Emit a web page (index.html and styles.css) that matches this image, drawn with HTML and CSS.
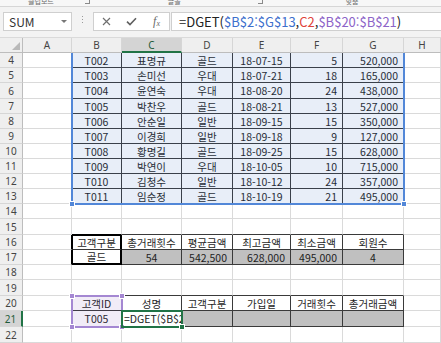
FILE: index.html
```html
<!DOCTYPE html>
<html lang="ko">
<head>
    <meta charset="UTF-8">
    <title>DGET</title>
    <link rel="stylesheet" href="styles.css">
</head>
<body>
    <div class="ribbon">
        <span class="grp grp-clip">클립보드</span>
        <span class="launch launch-1"></span>
        <span class="grp grp-font">글꼴</span>
        <span class="launch launch-2"></span>
        <span class="grp grp-align">맞춤</span>
    </div>

    <div class="fbar">
        <div class="namebox">SUM<span class="caret"></span></div>
        <div class="dots"><i></i><i></i><i></i></div>
        <div class="btns">
            <span class="btn">
                <svg width="9" height="9" viewBox="0 0 9 9"><path d="M1 1L8 8M8 1L1 8" stroke="#6f6f6f" stroke-width="1.2" fill="none"/></svg>
            </span>
            <span class="btn">
                <svg width="11" height="9" viewBox="0 0 11 9"><path d="M1 4.6L4 7.6L10 1.2" stroke="#5f5f5f" stroke-width="1.6" fill="none"/></svg>
            </span>
            <span class="btn fx"><i>f</i><small>x</small></span>
        </div>
        <div class="formula">=DGET(<span class="ref-b">$B$2:$G$13</span>,<span class="ref-r">C2</span>,<span class="ref-p">$B$20:$B$21</span>)</div>
    </div>

    <div class="sheet">
        <div class="corner"><span class="tri"></span></div>
        <div class="ch">A</div><div class="ch">B</div><div class="ch on">C</div><div class="ch">D</div>
        <div class="ch">E</div><div class="ch">F</div><div class="ch">G</div><div class="ch">H</div>

        <div class="rh">4</div><div class="c dr"></div><div class="c d ctr">T002</div><div class="c d ctr">표명규</div><div class="c d ctr">골드</div><div class="c d ctr">18-07-15</div><div class="c d num">5</div><div class="c d num">520,000</div><div class="c"></div>
        <div class="rh">5</div><div class="c dr"></div><div class="c d ctr">T003</div><div class="c d ctr">손미선</div><div class="c d ctr">우대</div><div class="c d ctr">18-07-21</div><div class="c d num">18</div><div class="c d num">165,000</div><div class="c"></div>
        <div class="rh">6</div><div class="c dr"></div><div class="c d ctr">T004</div><div class="c d ctr">윤연숙</div><div class="c d ctr">우대</div><div class="c d ctr">18-08-20</div><div class="c d num">24</div><div class="c d num">438,000</div><div class="c"></div>
        <div class="rh">7</div><div class="c dr"></div><div class="c d ctr">T005</div><div class="c d ctr">박찬우</div><div class="c d ctr">골드</div><div class="c d ctr">18-08-21</div><div class="c d num">13</div><div class="c d num">527,000</div><div class="c"></div>
        <div class="rh">8</div><div class="c dr"></div><div class="c d ctr">T006</div><div class="c d ctr">안순일</div><div class="c d ctr">일반</div><div class="c d ctr">18-09-15</div><div class="c d num">15</div><div class="c d num">350,000</div><div class="c"></div>
        <div class="rh">9</div><div class="c dr"></div><div class="c d ctr">T007</div><div class="c d ctr">이경희</div><div class="c d ctr">일반</div><div class="c d ctr">18-09-18</div><div class="c d num">9</div><div class="c d num">127,000</div><div class="c"></div>
        <div class="rh">10</div><div class="c dr"></div><div class="c d ctr">T008</div><div class="c d ctr">황명길</div><div class="c d ctr">골드</div><div class="c d ctr">18-09-25</div><div class="c d num">15</div><div class="c d num">628,000</div><div class="c"></div>
        <div class="rh">11</div><div class="c dr"></div><div class="c d ctr">T009</div><div class="c d ctr">박연이</div><div class="c d ctr">우대</div><div class="c d ctr">18-10-05</div><div class="c d num">10</div><div class="c d num">715,000</div><div class="c"></div>
        <div class="rh">12</div><div class="c dr"></div><div class="c d ctr">T010</div><div class="c d ctr">김청수</div><div class="c d ctr">일반</div><div class="c d ctr">18-10-12</div><div class="c d num">24</div><div class="c d num">357,000</div><div class="c"></div>
        <div class="rh">13</div><div class="c dr"></div><div class="c d ctr">T011</div><div class="c d ctr">임순정</div><div class="c d ctr">골드</div><div class="c d ctr">18-10-19</div><div class="c d num">21</div><div class="c d num">495,000</div><div class="c"></div>

        <div class="rh">14</div><div class="c"></div><div class="c"></div><div class="c"></div><div class="c"></div><div class="c"></div><div class="c"></div><div class="c"></div><div class="c"></div>
        <div class="rh">15</div><div class="c"></div><div class="c kb"></div><div class="c db"></div><div class="c db"></div><div class="c db"></div><div class="c db"></div><div class="c db"></div><div class="c"></div>

        <div class="rh">16</div><div class="c kr"></div><div class="c d ctr frame top">고객구분</div><div class="c d ctr">총거래횟수</div><div class="c d ctr">평균금액</div><div class="c d ctr">최고금액</div><div class="c d ctr">최소금액</div><div class="c d ctr">회원수</div><div class="c"></div>
        <div class="rh">17</div><div class="c kr"></div><div class="c d ctr frame bot">골드</div><div class="c d g ctr">54</div><div class="c d g num">542,500</div><div class="c d g num">628,000</div><div class="c d g num">495,000</div><div class="c d g ctr">4</div><div class="c"></div>

        <div class="rh">18</div><div class="c"></div><div class="c"></div><div class="c"></div><div class="c"></div><div class="c"></div><div class="c"></div><div class="c"></div><div class="c"></div>
        <div class="rh">19</div><div class="c"></div><div class="c db"></div><div class="c db"></div><div class="c db"></div><div class="c db"></div><div class="c db"></div><div class="c db"></div><div class="c"></div>

        <div class="rh">20</div><div class="c dr"></div><div class="c d ctr">고객ID</div><div class="c d ctr">성명</div><div class="c d ctr">고객구분</div><div class="c d ctr">가입일</div><div class="c d ctr">거래횟수</div><div class="c d ctr">총거래금액</div><div class="c"></div>
        <div class="rh on">21</div><div class="c dr"></div><div class="c d ctr">T005</div><div class="c d edit">=DGET($B$2</div><div class="c d g"></div><div class="c d g"></div><div class="c d g"></div><div class="c d g"></div><div class="c"></div>
        <div class="rh">22</div><div class="c"></div><div class="c"></div><div class="c"></div><div class="c"></div><div class="c"></div><div class="c"></div><div class="c"></div><div class="c"></div>

        <div class="sel sel-blue"><span class="hd bl"></span><span class="hd br"></span></div>
        <div class="sel sel-purple"><span class="hd tl"></span><span class="hd tr"></span><span class="hd bl"></span><span class="hd br"></span></div>
        <div class="sel sel-green"><span class="hd br"></span></div>
    </div>
</body>
</html>
```

FILE: styles.css
```css
body {
    margin: 0;
    width: 441px;
    height: 343px;
    overflow: hidden;
    background-color: #fff;
    font-family: "Noto Sans CJK KR", "Noto Sans", sans-serif;
}

/* ribbon remnant at the very top */
.ribbon {
    height: 6px;
    overflow: hidden;
    display: flex;
    align-items: flex-start;
    background-color: #f7f7f7;
    border-bottom: 1px solid #d6d6d6;
    color: #6a6a6a;
}

.grp {
    font-size: 7px;
    line-height: 8px;
    margin-top: -3px;
}

.grp-clip { margin-left: 28px; }
.grp-font { margin-left: 78px; }
.grp-align { margin-left: 83px; }

.launch {
    width: 4px;
    height: 3px;
    border-right: 1px solid #8a8a8a;
    border-bottom: 1px solid #8a8a8a;
}

.launch-1 { margin-left: 31px; }
.launch-2 { margin-left: 77px; }

/* formula bar */
.fbar {
    height: 31px;
    box-sizing: border-box;
    padding: 5px 0 0 3px;
    display: flex;
    align-items: flex-start;
    background-color: #f3f3f3;
    border-bottom: 1px solid #dadada;
}

.namebox,
.btns,
.formula {
    height: 19px;
    box-sizing: border-box;
    background-color: #fff;
    border: 1px solid #cfcfcf;
}

.namebox {
    width: 69px;
    display: flex;
    align-items: center;
    justify-content: space-between;
    padding: 0 4px 0 5px;
    font-size: 12px;
    color: #333;
}

.caret {
    width: 0;
    height: 0;
    border-left: 3px solid transparent;
    border-right: 3px solid transparent;
    border-top: 3px solid #777;
}

.dots {
    width: 2px;
    margin: 4px 9px 0 10px;
    display: flex;
    flex-direction: column;
    gap: 2px;
}

.dots i {
    width: 1px;
    height: 1px;
    background-color: #9a9a9a;
}

.btns {
    width: 77px;
    display: flex;
    align-items: center;
}

.btn {
    width: 25px;
    display: flex;
    justify-content: center;
    align-items: center;
}

.fx {
    font-family: "Liberation Serif", serif;
    color: #6a6a6a;
}

.fx i {
    font-size: 12px;
}

.fx small {
    font-size: 8px;
    font-style: italic;
    margin-top: 3px;
}

.formula {
    flex: 1;
    margin-left: 1px;
    border-right: none;
    padding-left: 7px;
    font-size: 13px;
    line-height: 17px;
    color: #222;
    white-space: nowrap;
}

.ref-b { color: #3d6fcc; }
.ref-r { color: #e0433b; }
.ref-p { color: #8d64c8; }

/* worksheet */
.sheet {
    position: relative;
    display: grid;
    grid-template-columns: 23px 49px 50px 60px 51px 58px 52px 61px 37px;
    grid-template-rows: 15px 15px 15px 16px 15px 15px 15px 15px 15px 15px 15px 15px 16px 15px 15px 15px 16px 15px 16px 16px;
    font-size: 10.5px;
    color: #1e1e1e;
}

.corner,
.ch,
.rh {
    box-sizing: border-box;
    background-color: #efefef;
    font-family: "Noto Sans", sans-serif;
    font-size: 10px;
    color: #444;
    display: flex;
    align-items: center;
    justify-content: center;
}

.corner {
    border-right: 1px solid #bdbdbd;
    border-bottom: 1px solid #bdbdbd;
    position: relative;
}

.tri {
    position: absolute;
    right: 2px;
    bottom: 2px;
    width: 0;
    height: 0;
    border-left: 8px solid transparent;
    border-bottom: 8px solid #b9b9b9;
}

.ch {
    border-right: 1px solid #d6d6d6;
    border-bottom: 1px solid #bdbdbd;
}

.rh {
    border-right: 1px solid #bdbdbd;
    border-bottom: 1px solid #d6d6d6;
}

.ch.on {
    background-color: #d4d4d4;
    border-bottom: 2px solid #217346;
    color: #1f5c3a;
}

.rh.on {
    background-color: #d4d4d4;
    border-right: 2px solid #217346;
    color: #1f5c3a;
}

.c {
    box-sizing: border-box;
    min-width: 0;
    overflow: hidden;
    white-space: nowrap;
    display: flex;
    align-items: center;
    padding: 0 5px 0 4px;
    border-right: 1px solid #dadada;
    border-bottom: 1px solid #dadada;
}

.ctr { justify-content: center; padding: 0; }
.num { justify-content: flex-end; }

.d { border-right-color: #3a3a3a; border-bottom-color: #3a3a3a; }
.dr { border-right-color: #3a3a3a; }
.db { border-bottom-color: #3a3a3a; }
.g { background-color: #c0c0c0; }

/* heavier frame around B16:B17 */
.kb { border-bottom-color: #000; }
.kr { border-right-color: #000; }
.frame {
    border-left: 1px solid #000;
    border-right: 2px solid #000;
}
.frame.top { border-top: 1px solid #000; }
.frame.bot { border-bottom: 2px solid #000; }

.edit {
    padding-left: 2px;
    padding-right: 0;
    color: #222;
}

/* reference highlights drawn over the cells */
.sel {
    position: absolute;
    top: -1px;
    left: -1px;
    right: -1px;
    bottom: -1px;
    border: 2px solid;
}

.sel-blue {
    grid-column: 3 / 9;
    grid-row: 2 / 12;
    top: 0;
    border-top: none;
    border-color: #5287d8;
    background-color: rgba(68, 114, 196, 0.12);
}

.sel-purple {
    grid-column: 3 / 4;
    grid-row: 18 / 20;
    border-color: #a487d2;
    background-color: rgba(120, 70, 180, 0.1);
}

.sel-green {
    grid-column: 4 / 5;
    grid-row: 19 / 20;
    border-color: #217346;
}

.hd {
    position: absolute;
    width: 4px;
    height: 4px;
    border: 1px solid #fff;
}

.sel-blue .hd { background-color: #5287d8; }
.sel-purple .hd { background-color: #a487d2; }
.sel-green .hd { background-color: #217346; }

.hd.tl { top: -4px; left: -4px; }
.hd.tr { top: -4px; right: -4px; }
.hd.bl { bottom: -4px; left: -4px; }
.hd.br { bottom: -4px; right: -4px; }
```
